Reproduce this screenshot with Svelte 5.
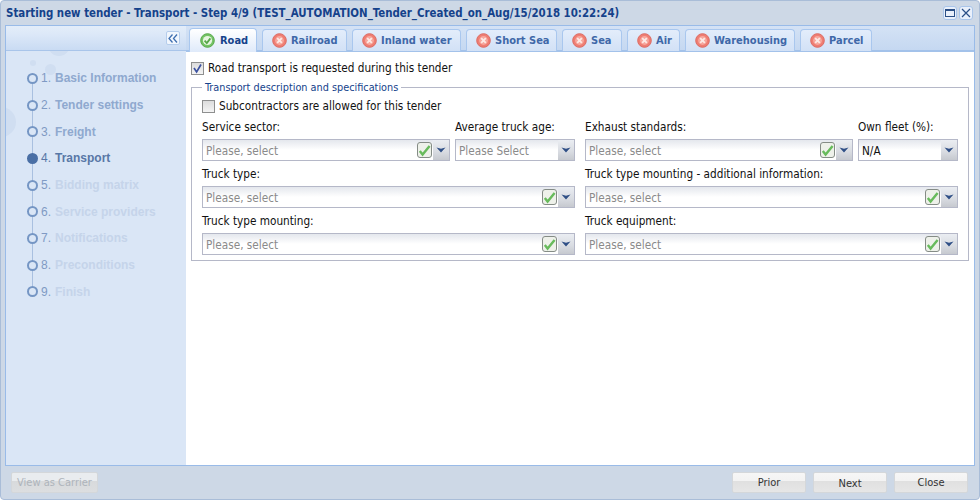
<script>
  const tabs = [
    { name: 'Road', w: 68, ok: true },
    { name: 'Railroad', w: 85 },
    { name: 'Inland water', w: 109 },
    { name: 'Short Sea', w: 91 },
    { name: 'Sea', w: 60 },
    { name: 'Air', w: 53 },
    { name: 'Warehousing', w: 110 },
    { name: 'Parcel', w: 72 }
  ];
  const steps = [
    { n: '1.', t: 'Basic Information', s: 'done' },
    { n: '2.', t: 'Tender settings', s: 'done' },
    { n: '3.', t: 'Freight', s: 'done' },
    { n: '4.', t: 'Transport', s: 'current' },
    { n: '5.', t: 'Bidding matrix', s: 'todo' },
    { n: '6.', t: 'Service providers', s: 'todo' },
    { n: '7.', t: 'Notifications', s: 'todo' },
    { n: '8.', t: 'Preconditions', s: 'todo' },
    { n: '9.', t: 'Finish', s: 'todo' }
  ];
</script>

{#snippet combo(text, check, plain)}
  <div class="combo">
    <span class="val" class:plain>{text}</span>
    {#if check}
      <svg class="chk" width="15" height="16" viewBox="0 0 15 16">
        <rect x="0.5" y="0.5" width="14" height="15" rx="2.5" fill="#eef1ea" stroke="#858c86"/>
        <path d="M2.8 9 L5.6 12.6 L12.6 4" fill="none" stroke="#68bb5c" stroke-width="2.4"/>
      </svg>
    {/if}
    <span class="arrow">
      <svg width="10" height="6" viewBox="0 0 10 6"><path d="M0.5 0.5 L5 1.8 L9.5 0.5 L5 5.5 Z" fill="#2f4f86"/></svg>
    </span>
  </div>
{/snippet}

{#snippet field(label, text, check = true, plain = false)}
  <div class="field">
    <div class="lbl">{label}</div>
    {@render combo(text, check, plain)}
  </div>
{/snippet}

<div class="win">
  <header class="title">
    <span class="ttl">Starting new tender - Transport - Step 4/9 (TEST_AUTOMATION_Tender_Created_on_Aug/15/2018 10:22:24)</span>
    <span class="tools">
      <span class="tool"><svg width="10" height="8" viewBox="0 0 10 8"><rect x="0.5" y="0.5" width="9" height="7" fill="none" stroke="#2a4f86" stroke-width="1"/><path d="M0 1.2 H10" stroke="#2a4f86" stroke-width="1.6"/></svg></span>
      <span class="tool"><svg width="10" height="10" viewBox="0 0 10 10"><path d="M1 1 L9 9 M9 1 L1 9" stroke="#2a4f86" stroke-width="1.2"/></svg></span>
    </span>
  </header>

  <div class="frame">
    <aside class="side">
      <span class="bubble b1"></span>
      <span class="bubble b2"></span>
      <span class="bubble b3"></span>
      <span class="bubble b4"></span>
      <div class="side-head">
        <span class="collapse"><svg width="10" height="9" viewBox="0 0 10 9"><path d="M4.5 0.5 L1 4.5 L4.5 8.5 M9 0.5 L5.5 4.5 L9 8.5" fill="none" stroke="#3f6fb0" stroke-width="1.3"/></svg></span>
      </div>
      <ol class="steps">
        {#each steps as st}
          <li class={st.s}>
            <span class="dot"></span>
            <span class="num">{st.n}</span>
            <span class="txt">{st.t}</span>
          </li>
        {/each}
      </ol>
    </aside>

    <main class="main">
      <nav class="tabs">
        {#each tabs as tab}
          <div class="tab" class:active={tab.ok} style:width="{tab.w}px">
            {#if tab.ok}
              <svg width="15" height="15" viewBox="0 0 15 15"><circle cx="7.5" cy="7.5" r="6.8" fill="#74c365" stroke="#58a84a"/><circle cx="7.5" cy="7.5" r="4.6" fill="#e6f5e0"/><path d="M4.6 7.6 L6.8 10 L10.4 5.4" fill="none" stroke="#58a84a" stroke-width="1.8"/></svg>
            {:else}
              <svg width="15" height="15" viewBox="0 0 15 15"><circle cx="7.5" cy="7.5" r="6.8" fill="#ef7d72" stroke="#dc6a62"/><circle cx="7.5" cy="7.5" r="4.4" fill="#f7a79d"/><path d="M5.2 5.2 L9.8 9.8 M9.8 5.2 L5.2 9.8" stroke="#fde9e5" stroke-width="1.8"/></svg>
            {/if}
            <span>{tab.name}</span>
          </div>
        {/each}
      </nav>

      <div class="panel">
        <label class="check top">
          <span class="box on"><svg width="11" height="11" viewBox="0 0 11 11"><path d="M2 5 L4.6 9 L9 1.5" fill="none" stroke="#3c52a0" stroke-width="1.7"/></svg></span>
          Road transport is requested during this tender
        </label>

        <fieldset>
          <legend>Transport description and specifications</legend>
          <label class="check sub"><span class="box"></span>Subcontractors are allowed for this tender</label>
          <div class="form">
            <div class="col">
              <div class="pair left">
                {@render field('Service sector:', 'Please, select')}
                {@render field('Average truck age:', 'Please Select', false)}
              </div>
              {@render field('Truck type:', 'Please, select')}
              {@render field('Truck type mounting:', 'Please, select')}
            </div>
            <div class="col">
              <div class="pair right">
                {@render field('Exhaust standards:', 'Please, select')}
                {@render field('Own fleet (%):', 'N/A', false, true)}
              </div>
              {@render field('Truck type mounting - additional information:', 'Please, select')}
              {@render field('Truck equipment:', 'Please, select')}
            </div>
          </div>
        </fieldset>
      </div>
    </main>
  </div>

  <footer class="foot">
    <button class="btn off">View as Carrier</button>
    <span class="grow"></span>
    <button class="btn">Prior</button>
    <button class="btn next">Next</button>
    <button class="btn">Close</button>
  </footer>
</div>

<style>
  :global(body) { margin: 0; }
  .win {
    width: 980px; height: 500px; box-sizing: border-box;
    background: #cdd8e6; border: 1px solid #a9bdd8; border-radius: 4px;
    display: flex; flex-direction: column; overflow: hidden;
    font-family: "DejaVu Sans", sans-serif; font-stretch: condensed; font-size: 11.7px; color: #111;
  }
  .title { height: 24px; flex: none; display: flex; align-items: center; padding: 0 6px 0 5px; }
  .ttl { flex: 1; font-weight: bold; font-size: 11.4px; color: #15428b; white-space: nowrap; }
  .tools { display: flex; gap: 2px; }
  .tool {
    width: 12px; height: 12px; border: 1px solid #a9c5ea; border-radius: 3px; background: #e9f0fb;
    display: flex; align-items: center; justify-content: center;
  }
  .frame {
    flex: none; height: 441px; margin: 0 4px; display: flex; box-sizing: border-box;
    border: 1px solid #99bbe8; background: #fff;
  }
  .side { width: 180px; flex: none; background: #dae6f6; position: relative; overflow: hidden; }
  .side-head {
    height: 25px; box-sizing: border-box; border-bottom: 1px solid #a9c5ea; position: relative;
    background: linear-gradient(#e3edf9, #dce8f8 35%, #c9dbf3);
    display: flex; justify-content: flex-end; align-items: center; padding-right: 6px;
  }
  .collapse {
    width: 12px; height: 12px; border: 1px solid #b5cdec; border-radius: 2px; background: #f1f6fd;
    display: flex; align-items: center; justify-content: center;
  }
  .bubble { position: absolute; border-radius: 50%; background: #d0def1; }
  .b1 { left: 42px; top: 8px; width: 22px; height: 22px; }
  .b2 { left: 24px; top: 34px; width: 6px; height: 6px; }
  .b3 { left: 39px; top: 38px; width: 11px; height: 11px; }
  .b4 { left: -20px; top: 81px; width: 30px; height: 30px; }
  .steps { list-style: none; margin: 0; padding: 0; position: relative; top: 14px; }
  .steps::before { content: ''; position: absolute; left: 26px; top: 13px; height: 214px; width: 1px; background: #a9c0e0; }
  .steps li { height: 26.7px; display: flex; align-items: center; position: relative; font-family: "Liberation Sans", sans-serif; font-stretch: normal; font-size: 12px; font-weight: bold; }
  .dot {
    position: absolute; left: 21px; width: 7px; height: 7px;
    border-radius: 50%; border: 2px solid #7596c4; background: #dae6f6;
  }
  .num { position: absolute; left: 35px; color: #7f9ac4; font-weight: normal; }
  .txt { position: absolute; left: 49px; white-space: nowrap; }
  .done .txt { color: #8fa9cf; }
  .current .txt { color: #5877a6; }
  .current .num { color: #5877a6; }
  .current .dot { background: #4a6fa5; border-color: #4a6fa5; }
  .todo .txt { color: #c5d4ea; }
  .main { flex: 1; min-width: 0; display: flex; flex-direction: column; }
  .tabs {
    height: 26px; box-sizing: border-box; flex: none; display: flex; gap: 5px; padding: 2px 0 0 3px; align-items: flex-end;
    border-bottom: 2px solid #a3c2ea; background: linear-gradient(#d4e2f5, #c5d8f1);
  }
  .tab {
    height: 22px; margin-bottom: -1px; flex: none; box-sizing: border-box; border: 1px solid #a9c7ee; border-bottom: none;
    border-radius: 4px 4px 0 0; background: linear-gradient(#e3edfb, #d2e1f6);
    display: flex; align-items: center; gap: 4px; padding: 0 0 0 9px;
    font-family: "DejaVu Sans", sans-serif; font-size: 11px; font-weight: bold; color: #3f68a8; white-space: nowrap;
  }
  .tab.active { background: linear-gradient(#fff, #dfeafa); color: #15428b; height: 24px; margin-bottom: -2px; padding-left: 10px; gap: 5px; }
  .panel { flex: 1; background: #fff; padding: 0 5px; }
  .check { display: flex; align-items: center; gap: 4px; white-space: nowrap; }
  .check.top { height: 18px; margin-top: 7px; }
  .check.sub { height: 16px; margin-bottom: 0; }
  .box {
    width: 11px; height: 11px; flex: none; border: 1px solid #8e8f8f; background: linear-gradient(#dcdcdc, #f4f4f4);
    display: inline-flex; align-items: center; justify-content: center;
  }
  fieldset {
    margin: 5px 0 0 0; padding: 5px 10px 6px 10px; border: 1px solid #b5b8c8; height: 179px; box-sizing: border-box;
    min-width: 0;
  }
  legend { padding: 0 3px; color: #15428b; font-size: 10.8px; line-height: 11px; }
  .form { display: grid; grid-template-columns: 373px 373px; column-gap: 10px; }
  .col { display: flex; flex-direction: column; }
  .pair { display: grid; column-gap: 5px; }
  .pair.left { grid-template-columns: 248px 120px; }
  .pair.right { grid-template-columns: 268px 100px; }
  .lbl { height: 25px; line-height: 27px; white-space: nowrap; }
  .combo {
    height: 22px; box-sizing: border-box; border: 1px solid #b5b8c8; display: flex; align-items: center;
    background: linear-gradient(#e4e7ed, #fff 50%);
  }
  .val { flex: 1; padding: 1px 0 0 3px; color: #8a8a8a; white-space: nowrap; }
  .val.plain { color: #111; }
  .chk { flex: none; margin-right: 1px; }
  .arrow {
    width: 16px; height: 20px; flex: none; display: flex; align-items: center; justify-content: center;
    background: linear-gradient(#eaedf2, #d8dbe1 60%, #c6c9cf);
  }
  .foot { height: 34px; flex: 1; display: flex; align-items: center; padding: 0 11px 1px 10px; gap: 7px; }
  .grow { flex: 1; }
  .btn {
    width: 74px; height: 21px; padding: 0; border: 1px solid #d4d7da; border-radius: 2px;
    background: linear-gradient(#f6f6f6 0, #f3f3f3 40%, #e0e0e0 42%, #e6e6e6 100%);
    font: inherit; font-size: 11px; color: #333;
  }
  .btn.off { width: 87px; color: #aeb4bb; background: linear-gradient(#e9ecef 0, #e9ecef 40%, #d8dadc 42%, #dcdee0 100%); }
  .btn.next { padding-top: 2px; }
</style>
